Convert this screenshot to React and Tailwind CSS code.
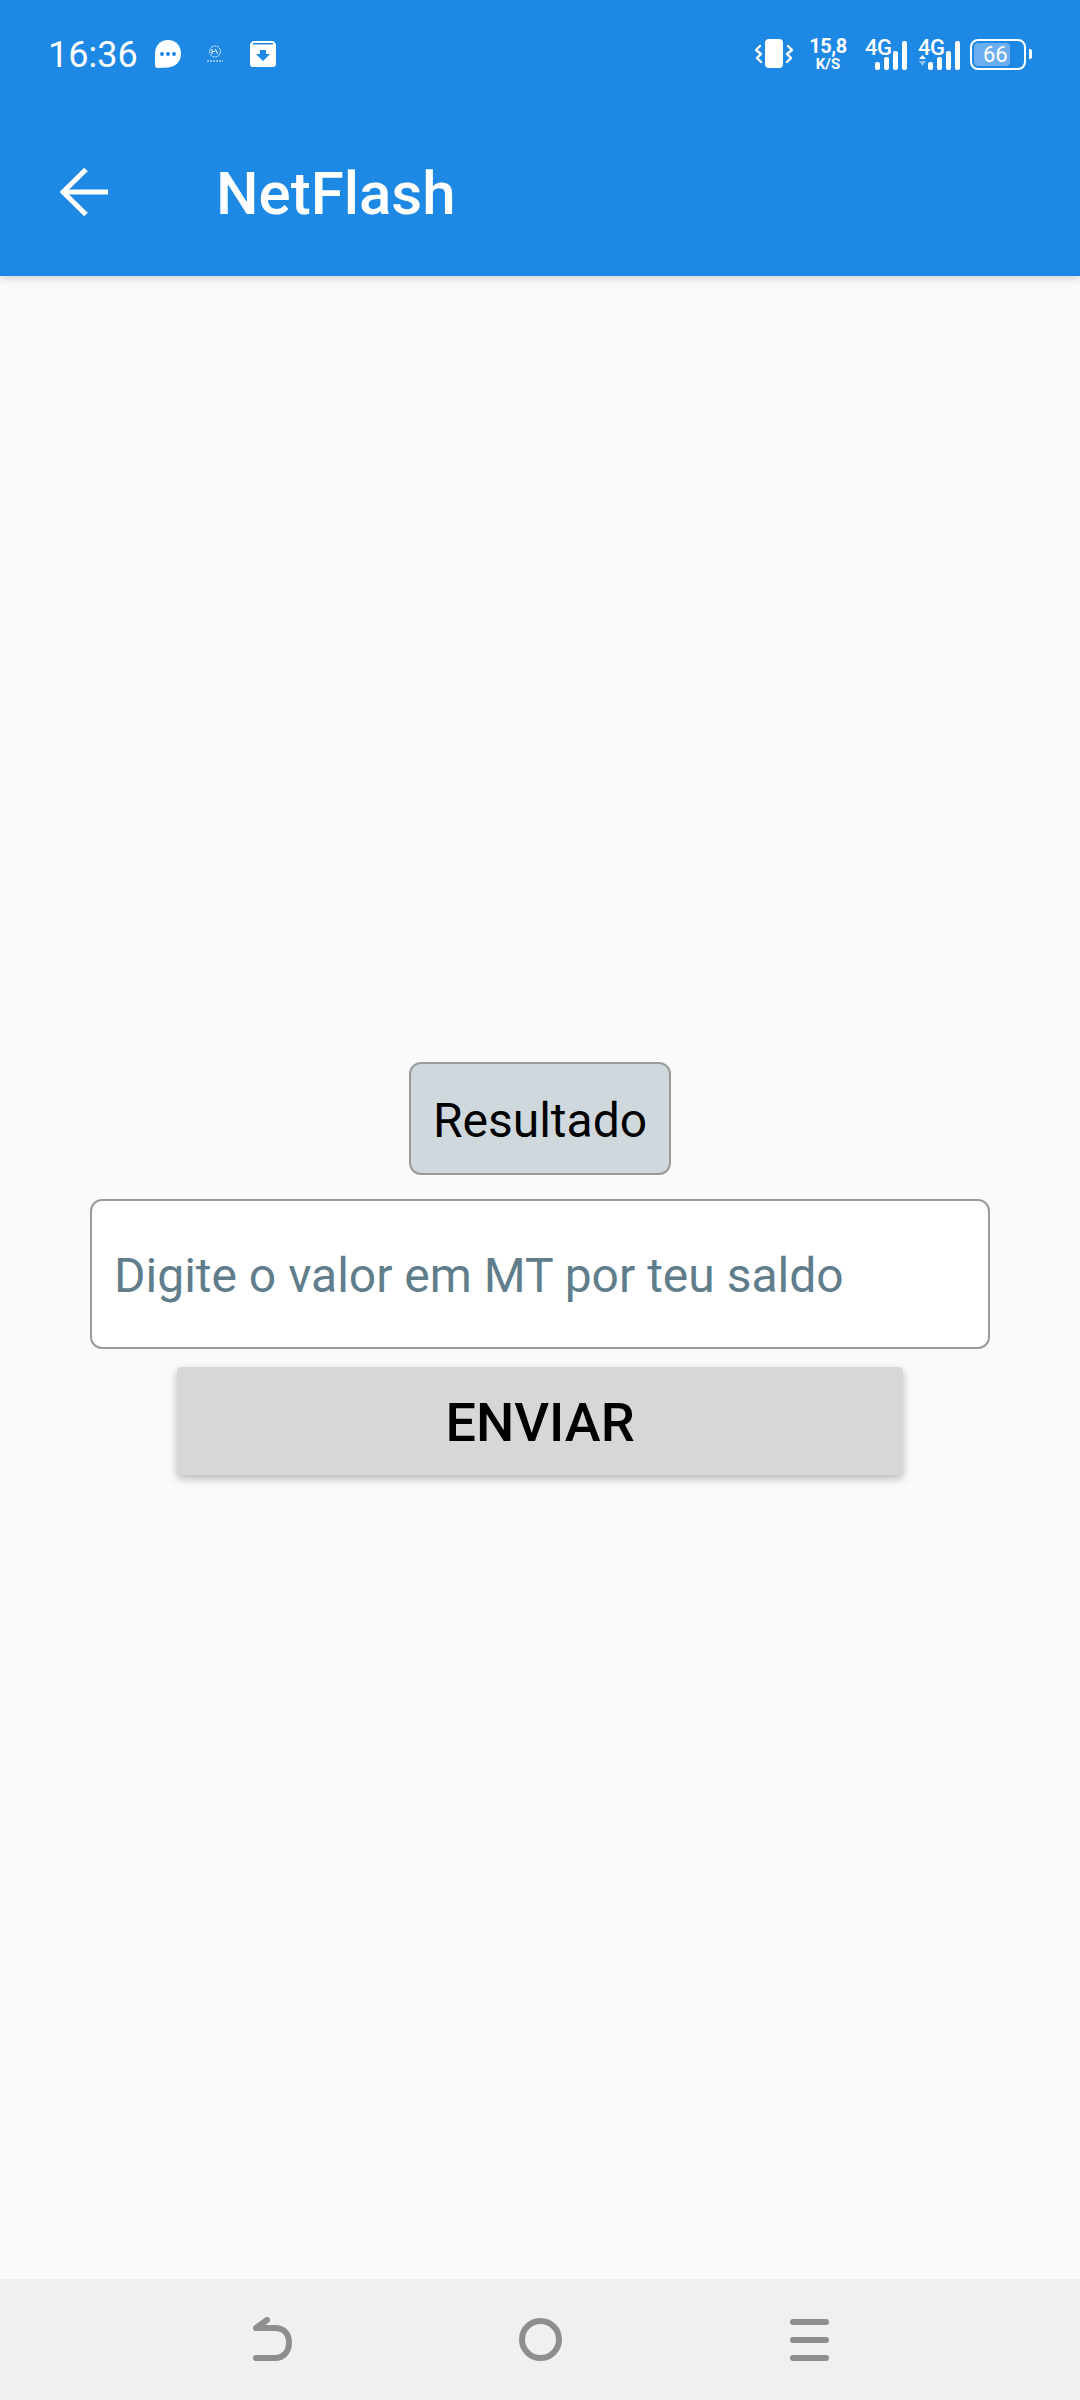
const Signal = ({ updown }) => (
  <div className="relative w-[42px] h-[33px]">
    <span className="absolute left-0 top-[-1px] text-[22px] leading-[22px] font-medium text-white tracking-[-0.5px]">4G</span>
    <svg className="absolute left-0 top-0" width="42" height="33" viewBox="0 0 42 33" fill="#fff">
      <rect x="10" y="24" width="5" height="8" rx="2" />
      <rect x="19" y="19" width="5" height="13" rx="2" />
      <rect x="28" y="13" width="5" height="19" rx="2" />
      <rect x="37" y="3" width="5" height="29" rx="2" />
      {updown && <path d="M1 21 L4.5 17 L8 21 Z" />}
      {updown && <path d="M1 23 L8 23 L4.5 28 Z" fill="#8fc0f0" />}
    </svg>
  </div>
);

export default function App() {
  return (
    <div className="flex flex-col w-[1080px] h-[2400px] bg-[#fafafa] font-['Roboto',sans-serif]">
      <header className="relative z-10 bg-[#1e88e5] shadow-[0_2px_8px_rgba(0,0,0,0.18)]">
        <div className="flex items-center justify-between h-[108px] pl-[48px] pr-[48px]">
          <div className="flex items-center">
            <span className="mt-[2px] text-[36px] leading-none text-white">16:36</span>
            <svg className="ml-[17px]" width="26" height="28" viewBox="0 0 26 28">
              <path d="M13 0 C21 0 26 6 26 13.5 C26 22 20 27 13 27.5 L3 28 C1 28 0 27 0 25 L0 13.5 C0 6 5 0 13 0 Z" fill="#fff" />
              <circle cx="7" cy="14" r="2" fill="#1e88e5" />
              <circle cx="13" cy="14" r="2" fill="#1e88e5" />
              <circle cx="19" cy="14" r="2" fill="#1e88e5" />
            </svg>
            <svg className="ml-[26px]" width="16" height="18" viewBox="0 0 16 18" fill="none" stroke="#fff">
              <circle cx="8" cy="6.5" r="5.5" strokeWidth="1" strokeDasharray="2 1" />
              <path d="M5 4 V9 M5 6.5 H8 M8 4 L11 9" strokeWidth="1" />
              <path d="M0 16 H16" strokeWidth="1" strokeDasharray="2 1" />
            </svg>
            <svg className="ml-[27px]" width="26" height="26" viewBox="0 0 26 26">
              <path d="M4 0 H22 C24 0 25 1 26 4 V23 C26 25 25 26 23 26 H3 C1 26 0 25 0 23 V4 C1 1 2 0 4 0 Z" fill="#fff" />
              <rect x="3" y="2" width="20" height="1.5" fill="#1e88e5" />
              <path d="M10 9 H16 V13 H20 L13 20 L6 13 H10 Z" fill="#1e88e5" />
            </svg>
          </div>
          <div className="flex items-center">
            <svg width="38" height="30" viewBox="0 0 38 30" fill="none">
              <rect x="10" y="0" width="18" height="29" rx="4" fill="#fff" />
              <path d="M5 7 L1 11 L6 15 L2 19 L6 23" stroke="#fff" strokeWidth="2.4" strokeLinecap="round" strokeLinejoin="round" />
              <path d="M33 7 L37 11 L32 15 L36 19 L32 23" stroke="#fff" strokeWidth="2.4" strokeLinecap="round" strokeLinejoin="round" />
            </svg>
            <div className="ml-[16px] w-[38px] flex flex-col items-center text-white font-bold">
              <span className="text-[20px] leading-[19px] tracking-[-0.5px]">15,8</span>
              <span className="text-[15px] leading-[14px] mt-[1px]">K/S</span>
            </div>
            <div className="ml-[18px]"><Signal /></div>
            <div className="ml-[11px]"><Signal updown /></div>
            <div className="ml-[10px] relative w-[56px] h-[31px] rounded-[8px] border-2 border-white">
              <div className="absolute left-[2px] top-[2px] bottom-[2px] w-[36px] rounded-[4px] bg-[#6aaef0]" />
              <span className="absolute left-[11px] top-[3px] text-[22px] leading-[22px] text-white">66</span>
            </div>
            <div className="ml-[3px] w-[3px] h-[10px] bg-white rounded-r-[2px]" />
          </div>
        </div>
        <div className="flex items-center h-[168px] pl-[60px]">
          <svg width="48" height="48" viewBox="0 0 48 48" fill="none" stroke="#fff" strokeWidth="5">
            <path d="M48 24 H3" />
            <path d="M26 1.5 L3 24 L26 46.5" />
          </svg>
          <h1 className="ml-[108px] mt-[3px] text-[60px] leading-none font-medium text-white">NetFlash</h1>
        </div>
      </header>

      <main className="flex-1 flex flex-col items-center pt-[786px]">
        <button className="w-[262px] h-[113px] rounded-[12px] border-2 border-[#9a9a9a] bg-[#cfd8dc] pt-[4px] text-[48px] text-black">
          Resultado
        </button>
        <div className="mt-[24px] flex items-center w-[900px] h-[150px] rounded-[12px] border-2 border-[#9a9a9a] bg-white pl-[22px] pt-[3px] text-[48px] text-[#607d8b]">
          Digite o valor em MT por teu saldo
        </div>
        <button className="mt-[18px] w-[726px] h-[108px] rounded-[4px] bg-[#d6d7d7] pt-[2px] text-[54px] font-medium text-black shadow-[0_4px_8px_rgba(0,0,0,0.25)]">
          ENVIAR
        </button>
      </main>

      <nav className="flex items-center h-[121px] bg-[#f0f0f0]">
        <div className="ml-[253px] mt-[-1px]">
          <svg width="39" height="44" viewBox="0 0 39 44" fill="none" stroke="#8e8e8e" strokeWidth="6" strokeLinecap="round" strokeLinejoin="round">
            <path d="M3 41 H22 C31 41 36 34 36 26 C36 17 31 11 22 11 H3 L14 3" />
          </svg>
        </div>
        <div className="ml-[227px] w-[43px] h-[43px] rounded-full border-[6px] border-[#8e8e8e]" />
        <div className="ml-[228px] w-[39px] flex flex-col gap-[12px]">
          <div className="h-[6px] rounded-full bg-[#8e8e8e]" />
          <div className="h-[6px] rounded-full bg-[#8e8e8e]" />
          <div className="h-[6px] rounded-full bg-[#8e8e8e]" />
        </div>
      </nav>
    </div>
  );
}
